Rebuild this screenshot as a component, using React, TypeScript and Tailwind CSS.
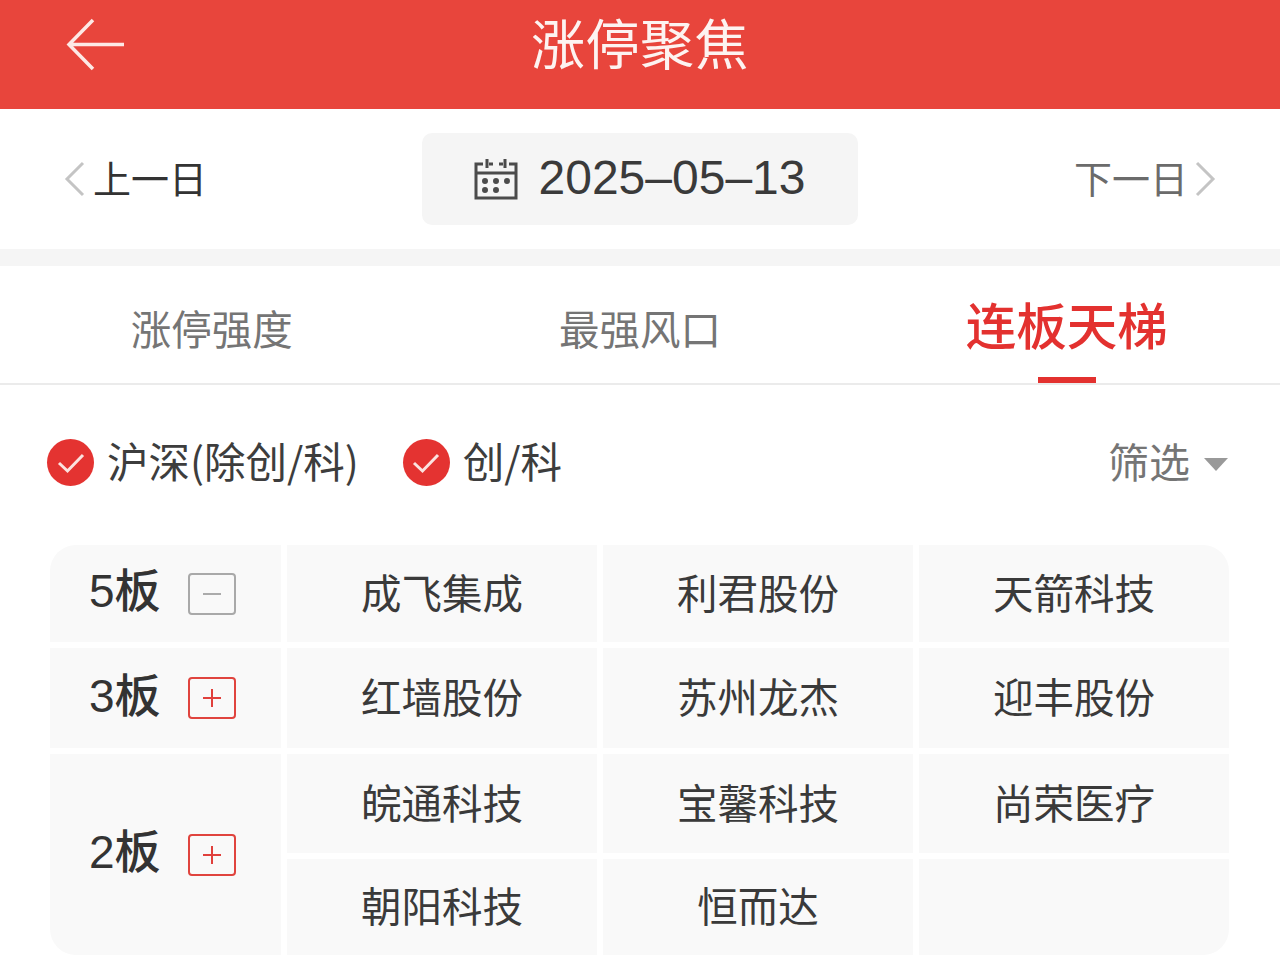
const font = "font-['Liberation_Sans','Noto_Sans_CJK_SC',sans-serif]";

function Toggle({ open }: { open?: boolean }) {
  return (
    <div
      className={`flex h-[42px] w-[48px] items-center justify-center rounded-[4px] border-2 ${
        open ? "border-[#a9a9a9]" : "border-[#e0443e]"
      }`}
    >
      <svg width="20" height="20" viewBox="0 0 20 20" fill="none">
        <path d="M1 10H19" stroke={open ? "#ababab" : "#e0403c"} strokeWidth="2" />
        {!open && <path d="M10 1V19" stroke="#e0403c" strokeWidth="2" />}
      </svg>
    </div>
  );
}

function Check({ label }: { label: string }) {
  return (
    <div className="flex items-center gap-[13px]">
      <div className="flex h-[47px] w-[47px] items-center justify-center rounded-full bg-[#e43331]">
        <svg width="28" height="22" viewBox="0 0 28 22" fill="none">
          <path d="M2 11L10.500 19L26 3" stroke="#fbe3e0" strokeWidth="3" />
        </svg>
      </div>
      <span className="pb-[4px] font-['Noto_Sans_CJK_SC',sans-serif] text-[41.5px] leading-none text-[#3d3d3d]">{label}</span>
    </div>
  );
}

function Cell({ children, className = "" }: { children?: string; className?: string }) {
  return (
    <div className={`flex items-center justify-center bg-[#f9f9f9] pt-[3px] text-[40.5px] text-[#3a3a3a] ${className}`}>
      {children}
    </div>
  );
}

function Level({ label, open, className = "" }: { label: string; open?: boolean; className?: string }) {
  return (
    <div className={`flex items-center bg-[#f9f9f9] pl-[39px] ${className}`}>
      <span className="w-[99px] pb-[5px] text-[46px] font-medium leading-none text-[#333333]">{label}</span>
      <Toggle open={open} />
    </div>
  );
}

export default function App() {
  return (
    <div className={`h-[961px] w-[1280px] overflow-hidden bg-white ${font}`}>
      <header className="relative flex h-[109px] items-center justify-center bg-[#e8453c]">
        <svg className="absolute left-[66px] top-[18px]" width="60" height="54" viewBox="0 0 60 54" fill="none">
          <path d="M58 26.500H4M27 2L3 26.500L27 51" stroke="#fde9e6" strokeWidth="3.500" />
        </svg>
        <h1 className="pb-[17px] text-[54px] font-normal leading-none tracking-[0.5px] text-[#fdf3f1]">涨停聚焦</h1>
      </header>

      <div className="flex h-[140px] items-center justify-between pl-[64px] pr-[64px]">
        <div className="flex items-center gap-[7px]">
          <svg width="22" height="36" viewBox="0 0 22 36" fill="none">
            <path d="M19 2L3 18L19 34" stroke="#c4c4c4" strokeWidth="3" />
          </svg>
          <span className="pt-[2px] text-[38px] leading-none text-[#333333]">上一日</span>
        </div>
        <div className="mr-[2px] flex h-[92px] w-[436px] items-center justify-center gap-[21px] rounded-[10px] bg-[#f5f5f5]">
          <svg width="44" height="42" viewBox="0 0 44 42" fill="none" stroke="#4b4b4b" strokeWidth="3">
            <path d="M9 6H2V40H42V6H35M15 6H19M25 6H29M2 15H42M13 1V10M31 1V10" />
            <circle cx="11" cy="23" r="1.500" fill="#4b4b4b" />
            <circle cx="22" cy="23" r="1.500" fill="#4b4b4b" />
            <circle cx="33" cy="23" r="1.500" fill="#4b4b4b" />
            <circle cx="11" cy="32" r="1.500" fill="#4b4b4b" />
            <circle cx="22" cy="32" r="1.500" fill="#4b4b4b" />
          </svg>
          <span className="pb-[2px] text-[48px] leading-none text-[#3a3a3a]">2025–05–13</span>
        </div>
        <div className="flex items-center gap-[6px]">
          <span className="pt-[2px] text-[38px] leading-none text-[#6b6b6b]">下一日</span>
          <svg width="22" height="36" viewBox="0 0 22 36" fill="none">
            <path d="M3 2L19 18L3 34" stroke="#c4c4c4" strokeWidth="3" />
          </svg>
        </div>
      </div>

      <div className="h-[17px] bg-[#f5f5f5]" />

      <nav className="grid h-[119px] grid-cols-3 border-b-2 border-[#ebebeb]">
        <div className="flex items-center justify-center pr-[3px] pt-[14px] text-[40.5px] text-[#757575]">涨停强度</div>
        <div className="flex items-center justify-center pt-[14px] text-[40.5px] text-[#757575]">最强风口</div>
        <div className="relative flex items-center justify-center pt-[6px] text-[50.5px] font-medium text-[#e3312f]">
          连板天梯
          <div className="absolute bottom-0 left-[185px] h-[6px] w-[58px] bg-[#e3312f]" />
        </div>
      </nav>

      <div className="flex items-center justify-between pb-[59px] pl-[47px] pr-[52px] pt-[54px]">
        <div className="flex items-center gap-[44px]">
          <Check label="沪深(除创/科)" />
          <Check label="创/科" />
        </div>
        <div className="flex items-center gap-[14px]">
          <span className="pt-[4px] text-[41px] leading-none text-[#757575]">筛选</span>
          <div className="mt-[4px] h-0 w-0 border-x-[12px] border-t-[13px] border-x-transparent border-t-[#999999]" />
        </div>
      </div>

      <div className="ml-[50px] grid w-[1179px] grid-cols-[231px_310px_310px_310px] grid-rows-[97px_100px_99px_96px] gap-[6px] overflow-hidden rounded-[26px]">
        <Level label="5板" open />
        <Cell>成飞集成</Cell>
        <Cell>利君股份</Cell>
        <Cell>天箭科技</Cell>
        <Level label="3板" />
        <Cell>红墙股份</Cell>
        <Cell>苏州龙杰</Cell>
        <Cell>迎丰股份</Cell>
        <Level label="2板" className="row-span-2" />
        <Cell>皖通科技</Cell>
        <Cell>宝馨科技</Cell>
        <Cell>尚荣医疗</Cell>
        <Cell>朝阳科技</Cell>
        <Cell>恒而达</Cell>
        <Cell />
      </div>
    </div>
  );
}
